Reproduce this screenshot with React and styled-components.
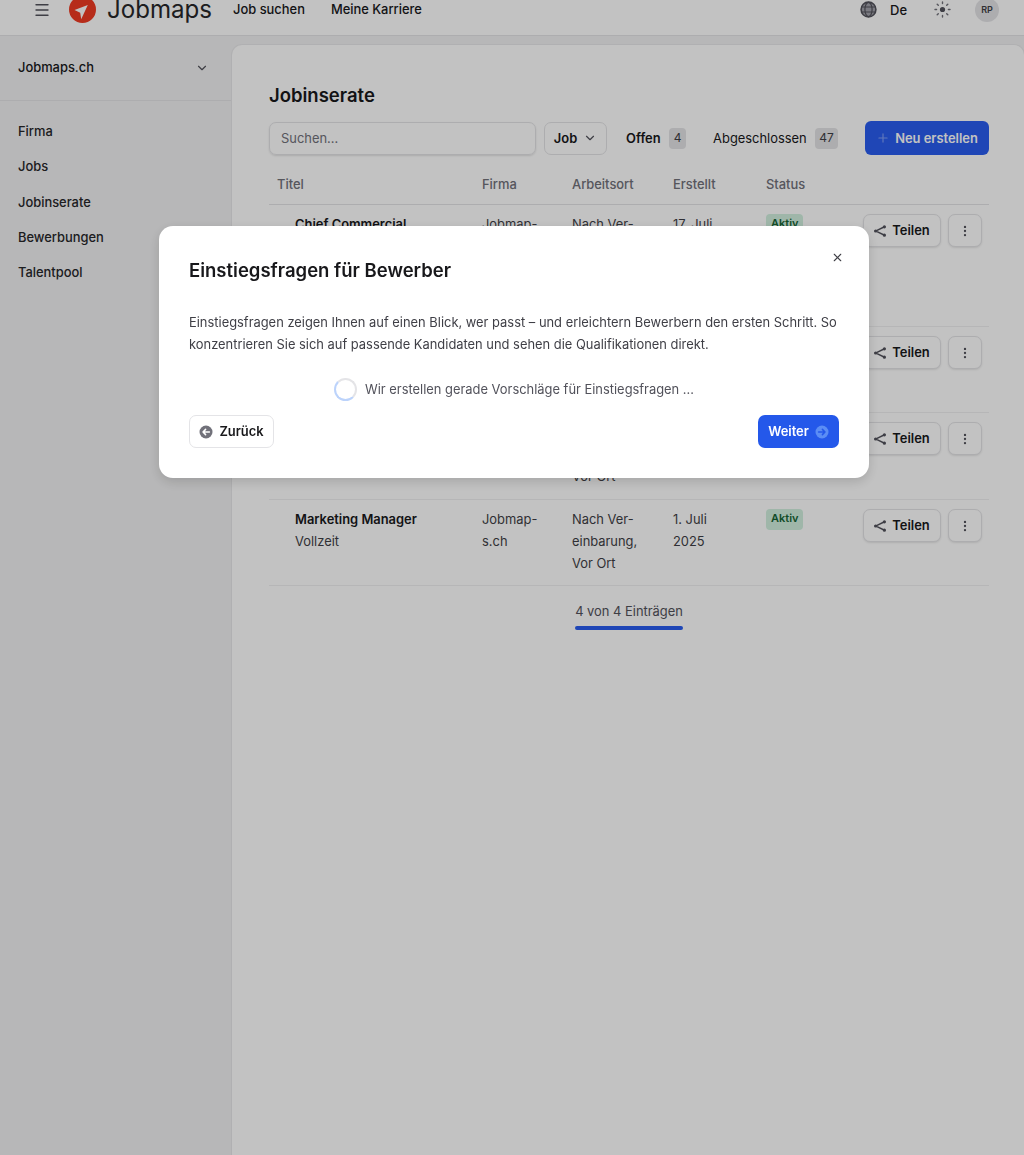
import styled, { createGlobalStyle } from "styled-components";
import { ChevronDown, EllipsisVertical, Menu, Plus, X } from "lucide-react";

const GlobalStyle = createGlobalStyle`
  html, body {
    margin: 0;
    height: 100%;
    overflow: hidden;
    background: #fff;
    font-family: Inter, "Liberation Sans", sans-serif;
    color: #18181b;
  }
  * { box-sizing: border-box; }
`;

const jobs = [
  { title: ["Chief Commercial", "Officer"], type: "Vollzeit", date: ["17. Juli", "2025"], height: 122 },
  { title: ["Sales Manager"], type: "Vollzeit", date: ["8. Juli", "2025"], height: 86 },
  { title: ["Software Engineer"], type: "Vollzeit", date: ["3. Juli", "2025"], height: 87 },
  { title: ["Marketing Manager"], type: "Vollzeit", date: ["1. Juli", "2025"], height: 86 },
];

const navItems = ["Firma", "Jobs", "Jobinserate", "Bewerbungen", "Talentpool"];

const ShareIcon = ({ size = 14 }) => (
  <svg width={size} height={size} viewBox="0 0 14 14" fill="#52525b" stroke="#52525b" strokeWidth="1.4">
    <circle cx="11.4" cy="2.8" r="0.9" />
    <circle cx="2.6" cy="7" r="0.9" />
    <circle cx="11.4" cy="11.2" r="0.9" />
    <path d="M11 3 3 6.8M3 7.2l8 3.8" fill="none" />
  </svg>
);

const CircleArrow = ({ back, bg, fg }) => (
  <svg width="14" height="14" viewBox="0 0 14 14">
    <circle cx="7" cy="7" r="6.5" fill={bg} />
    <path
      d={back ? "M10.4 7H4M6.6 4.4 4 7l2.6 2.6" : "M3.6 7H10M7.4 4.4 10 7 7.4 9.6"}
      fill="none"
      stroke={fg}
      strokeWidth="1.5"
      strokeLinecap="round"
      strokeLinejoin="round"
    />
  </svg>
);

const App = () => (
  <Page>
    <GlobalStyle />
    <Header>
      <MenuButton>
        <Menu size={18} strokeWidth={1.8} />
      </MenuButton>
      <svg width="27" height="27" viewBox="0 0 27 27">
        <circle cx="13.5" cy="13.5" r="13.5" fill="#ef3b23" />
        <path d="M18.8 9 5.5 14l5.7 2.7 1 6.6z" fill="#fff" />
      </svg>
      <Logo>Jobmaps</Logo>
      <TopNav>
        <TopLink>Job suchen</TopLink>
        <TopLink>Meine Karriere</TopLink>
      </TopNav>
      <HeaderRight>
        <svg width="17" height="17" viewBox="0 0 17 17" fill="none">
          <circle cx="8.5" cy="8.5" r="7.4" fill="#a1a1aa" stroke="#52525b" strokeWidth="1.6" />
          <ellipse cx="8.5" cy="8.5" rx="3.6" ry="7.2" stroke="#52525b" strokeWidth="1.2" />
          <path d="M1.6 6h13.8M1.6 11h13.8" stroke="#52525b" strokeWidth="1.2" />
        </svg>
        <Lang>De</Lang>
        <svg width="17" height="17" viewBox="0 0 17 17" fill="#52525b" stroke="#71717a" strokeWidth="1.4" strokeLinecap="round">
          <circle cx="8.5" cy="8.5" r="2.6" stroke="none" />
          <path d="M8.5 1v1.6M8.5 14.4V16M1 8.5h1.6M14.4 8.5H16M3.2 3.2l1.1 1.1M12.7 12.7l1.1 1.1M3.2 13.8l1.1-1.1M12.7 4.3l1.1-1.1" />
        </svg>
        <Avatar>RP</Avatar>
      </HeaderRight>
    </Header>

    <Body>
      <Sidebar>
        <OrgRow>
          <span>Jobmaps.ch</span>
          <ChevronDown size={14} color="#52525b" />
        </OrgRow>
        <SideNav>
          {navItems.map((item) => (
            <SideLink key={item}>{item}</SideLink>
          ))}
        </SideNav>
      </Sidebar>

      <Main>
        <Title>Jobinserate</Title>
        <Toolbar>
          <Search>Suchen...</Search>
          <Select>
            Job <ChevronDown size={14} color="#52525b" />
          </Select>
          <Tab $active>
            Offen <Count>4</Count>
          </Tab>
          <Tab>
            Abgeschlossen <Count>47</Count>
          </Tab>
          <NewButton>
            <Plus size={14} color="#7f9df5" />
            Neu erstellen
          </NewButton>
        </Toolbar>

        <HeadRow>
          <HeadCell>Titel</HeadCell>
          <HeadCell>Firma</HeadCell>
          <HeadCell>Arbeitsort</HeadCell>
          <HeadCell>Erstellt</HeadCell>
          <HeadCell>Status</HeadCell>
        </HeadRow>
        {jobs.map((job) => (
          <Row key={job.title[0]} $height={job.height}>
            <TitleCell>
              <JobName>
                {job.title.map((line) => (
                  <div key={line}>{line}</div>
                ))}
              </JobName>
              <div>{job.type}</div>
            </TitleCell>
            <Cell>
              Jobmap-
              <br />
              s.ch
            </Cell>
            <Cell>
              Nach Ver-
              <br />
              einbarung,
              <br />
              Vor Ort
            </Cell>
            <Cell>
              {job.date[0]}
              <br />
              {job.date[1]}
            </Cell>
            <Cell>
              <Status>Aktiv</Status>
            </Cell>
            <Actions>
              <ShareButton>
                <ShareIcon />
                Teilen
              </ShareButton>
              <MoreButton>
                <EllipsisVertical size={14} color="#52525b" />
              </MoreButton>
            </Actions>
          </Row>
        ))}
        <Footer>
          <FooterInner>
            4 von 4 Einträgen
            <Progress />
          </FooterInner>
        </Footer>
      </Main>
    </Body>

    <Overlay>
      <Modal>
        <CloseButton>
          <X size={13} color="#3f3f46" />
        </CloseButton>
        <ModalTitle>Einstiegsfragen für Bewerber</ModalTitle>
        <ModalText>
          Einstiegsfragen zeigen Ihnen auf einen Blick, wer passt – und erleichtern Bewerbern den ersten Schritt. So
          konzentrieren Sie sich auf passende Kandidaten und sehen die Qualifikationen direkt.
        </ModalText>
        <Loading>
          <Spinner />
          Wir erstellen gerade Vorschläge für Einstiegsfragen ...
        </Loading>
        <ModalFooter>
          <BackButton>
            <CircleArrow back bg="#71717a" fg="#fff" />
            Zurück
          </BackButton>
          <NextButton>
            Weiter
            <CircleArrow bg="#5b8df5" fg="#2458ea" />
          </NextButton>
        </ModalFooter>
      </Modal>
    </Overlay>
  </Page>
);

const Page = styled.div`
  height: 100vh;
  display: flex;
  flex-direction: column;
  overflow: hidden;
`;

const Header = styled.header`
  flex: none;
  height: 52px;
  margin-top: -16px;
  display: flex;
  align-items: center;
  padding: 0 25px 0 33px;
  background: #fff;
  border-bottom: 1px solid #e4e4e7;
`;

const MenuButton = styled.div`
  display: flex;
  width: 36px;
  color: #52525b;
`;

const Logo = styled.div`
  margin-left: 11px;
  font-size: 24.1px;
  color: #27272a;
`;

const TopNav = styled.nav`
  display: flex;
  gap: 26px;
  margin-left: 21px;
`;

const TopLink = styled.div`
  font-size: 12.9px;
  font-weight: 500;
`;

const HeaderRight = styled.div`
  display: flex;
  align-items: center;
  margin-left: auto;
`;

const Lang = styled.div`
  width: 44px;
  margin-left: 13px;
  font-size: 13px;
  font-weight: 500;
`;

const Avatar = styled.div`
  width: 24px;
  height: 24px;
  margin-left: 24px;
  display: flex;
  align-items: center;
  justify-content: center;
  border-radius: 50%;
  background: #e4e4e7;
  font-size: 9px;
  font-weight: 600;
  color: #3f3f46;
`;

const Body = styled.div`
  flex: 1;
  display: flex;
  background: #f1f1f2;
`;

const Sidebar = styled.aside`
  flex: none;
  width: 232px;
  padding-top: 9px;
`;

const OrgRow = styled.div`
  height: 56px;
  display: flex;
  align-items: center;
  justify-content: space-between;
  padding: 0 23px 10px 18px;
  font-size: 12.9px;
  font-weight: 500;
  border-bottom: 1px solid #e4e4e7;
`;

const SideNav = styled.nav`
  display: flex;
  flex-direction: column;
  gap: 19.25px;
  padding: 23px 18px;
`;

const SideLink = styled.div`
  font-size: 12.9px;
  line-height: 16px;
  font-weight: 500;
  color: #27272a;
`;

const Main = styled.main`
  flex: 1;
  margin-top: 9px;
  padding: 38px 35px 0 37px;
  background: #fff;
  border-radius: 10px 10px 0 0;
  box-shadow: 0 0 0 1px #e8e8ea;
`;

const Title = styled.h1`
  margin: 0;
  font-size: 18.5px;
  line-height: 24px;
  font-weight: 600;
`;

const Toolbar = styled.div`
  display: flex;
  align-items: center;
  margin-top: 14px;
  height: 34px;
  font-size: 12.9px;
`;

const Search = styled.div`
  width: 267px;
  height: 33px;
  display: flex;
  align-items: center;
  padding-left: 11px;
  border: 1px solid #e4e4e7;
  border-radius: 7px;
  box-shadow: 0 1px 2px rgba(0, 0, 0, 0.12);
  color: #71717a;
`;

const Select = styled.div`
  width: 63px;
  height: 33px;
  margin-left: 8px;
  display: flex;
  align-items: center;
  justify-content: center;
  gap: 6px;
  border: 1px solid #e4e4e7;
  border-radius: 7px;
  font-weight: 600;
`;

const Tab = styled.div`
  display: flex;
  align-items: center;
  gap: 8.5px;
  margin-left: ${(p) => (p.$active ? "19px" : "27px")};
  font-weight: ${(p) => (p.$active ? 600 : 400)};
`;

const Count = styled.span`
  min-width: 17px;
  height: 21px;
  padding: 0 4px 2px;
  display: flex;
  align-items: center;
  justify-content: center;
  border-radius: 4px;
  background: #e4e4e7;
  font-size: 12px;
  font-weight: 400;
  color: #3f3f46;
`;

const NewButton = styled.button`
  width: 124px;
  height: 34px;
  margin-left: auto;
  display: flex;
  align-items: center;
  justify-content: center;
  gap: 5px;
  border: 0;
  border-radius: 6px;
  background: #295df0;
  color: #fff;
  font: 600 12.9px Inter, sans-serif;
`;

const columns = "205px 90px 101px 93px 93px 1fr";

const HeadRow = styled.div`
  display: grid;
  grid-template-columns: ${columns};
  height: 50px;
  align-items: end;
  padding-bottom: 11px;
  border-bottom: 1px solid #e4e4e7;
`;

const HeadCell = styled.div`
  padding-left: 8px;
  font-size: 12.9px;
  line-height: 16px;
  font-weight: 500;
  color: #71717a;
`;

const Row = styled.div`
  display: grid;
  grid-template-columns: ${columns};
  height: ${(p) => p.$height}px;
  padding-top: 9px;
  border-bottom: 1px solid #f0f0f1;
`;

const Cell = styled.div`
  padding-left: 8px;
  font-size: 12.9px;
  line-height: 22px;
  color: #3f3f46;
`;

const TitleCell = styled(Cell)`
  padding-left: 26px;
`;

const JobName = styled.div`
  font-weight: 600;
  color: #18181b;
`;

const Status = styled.span`
  display: inline-block;
  height: 21px;
  padding: 0 5px;
  border-radius: 4px;
  background: #d1f0df;
  color: #166534;
  font-size: 11px;
  line-height: 19px;
  font-weight: 600;
  vertical-align: top;
`;

const Actions = styled.div`
  display: flex;
  gap: 7px;
  padding-left: 12px;
`;

const ShareButton = styled.button`
  width: 78px;
  height: 33px;
  display: flex;
  align-items: center;
  justify-content: center;
  gap: 5px;
  padding: 0 ${(p) => (p.$icon ? 0 : "1px")} 0 0;
  border: 1px solid #e4e4e7;
  border-radius: 7px;
  background: #fff;
  box-shadow: 0 1px 2px rgba(0, 0, 0, 0.1);
  font: 600 12.9px Inter, sans-serif;
  color: #18181b;
`;

const MoreButton = styled(ShareButton).attrs({ $icon: true })`
  width: 34px;
`;

const Footer = styled.div`
  display: flex;
  justify-content: center;
  padding-top: 17px;
`;

const FooterInner = styled.div`
  font-size: 12.9px;
  line-height: 18px;
  color: #52525b;
`;

const Progress = styled.div`
  height: 4px;
  margin-top: 5px;
  border-radius: 2px;
  background: #295df0;
`;

const Overlay = styled.div`
  position: fixed;
  inset: 0;
  padding: 226px 0 0 159px;
  background: rgba(0, 0, 0, 0.24);
`;

const Modal = styled.div`
  position: relative;
  width: 710px;
  height: 252px;
  padding: 34px 30px 30px;
  border-radius: 14px;
  background: #fff;
  box-shadow: 0 4px 12px rgba(0, 0, 0, 0.15);
`;

const CloseButton = styled.div`
  position: absolute;
  top: 25px;
  right: 25px;
  display: flex;
`;

const ModalTitle = styled.h2`
  margin: 0;
  font-size: 18.5px;
  line-height: 20px;
  font-weight: 600;
`;

const ModalText = styled.p`
  margin: 32px -2px 0 0;
  font-size: 12.9px;
  line-height: 21.5px;
  color: #3f3f46;
`;

const Loading = styled.div`
  display: flex;
  align-items: center;
  justify-content: center;
  gap: 8px;
  margin-top: 23px;
  font-size: 12.9px;
  color: #52525b;
`;

const Spinner = styled.div`
  width: 23px;
  height: 23px;
  border: 2px solid #e4e4e7;
  border-bottom-color: #bcd3fb;
  border-left-color: #bcd3fb;
  border-radius: 50%;
`;

const ModalFooter = styled.div`
  display: flex;
  justify-content: space-between;
  margin-top: 14px;
`;

const BackButton = styled.button`
  width: 85px;
  height: 33px;
  display: flex;
  align-items: center;
  justify-content: center;
  gap: 6px;
  padding: 0;
  border: 1px solid #e4e4e7;
  border-radius: 7px;
  background: #fff;
  font: 600 12.9px Inter, sans-serif;
  color: #18181b;
`;

const NextButton = styled(BackButton)`
  width: 81px;
  border: 0;
  background: #2458ea;
  color: #fff;
`;

export default App;
